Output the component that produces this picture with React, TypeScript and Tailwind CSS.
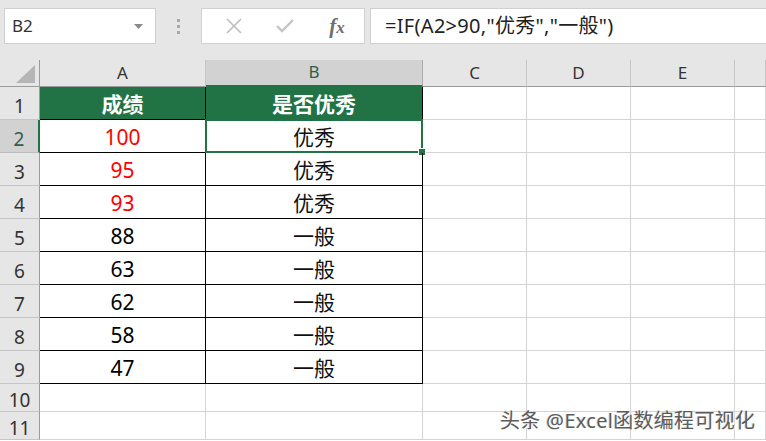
import React from 'react'

const GREEN = '#217346'

const rows: { score: string; result: string; hot: boolean }[] = [
  { score: '100', result: '优秀', hot: true },
  { score: '95', result: '优秀', hot: true },
  { score: '93', result: '优秀', hot: true },
  { score: '88', result: '一般', hot: false },
  { score: '63', result: '一般', hot: false },
  { score: '62', result: '一般', hot: false },
  { score: '58', result: '一般', hot: false },
  { score: '47', result: '一般', hot: false },
]

function ColHeader({ label, selected }: { label: string; selected?: boolean }) {
  return (
    <div
      className={
        selected
          ? 'flex items-end justify-center pb-[1px] bg-[#d2d2d2] border-r border-[#ababab] border-b-2 border-b-[#217346] text-[17px] text-[#2f5f44]'
          : 'flex items-end justify-center pb-[1px] bg-[#e6e6e6] border-r border-[#c6c6c6] border-b border-b-[#9b9b9b] text-[17px] text-[#333]'
      }
    >
      {label}
    </div>
  )
}

function RowHeader({ n, selected }: { n: number; selected?: boolean }) {
  return (
    <div
      className={
        selected
          ? 'flex items-center justify-center pt-[6px] bg-[#d2d2d2] border-b border-[#bdbdbd] border-r-2 border-r-[#217346] text-[19px] text-[#2f5f44]'
          : 'flex items-center justify-center pt-[6px] bg-[#e6e6e6] border-b border-[#c6c6c6] border-r border-r-[#9b9b9b] text-[19px] text-[#333]'
      }
    >
      {n}
    </div>
  )
}

function Blank() {
  return <div className="border-r border-b border-[#d4d4d4]" />
}

export default function App() {
  return (
    <div
      className="relative w-[766px] h-[441px] overflow-hidden bg-white"
      style={{ fontFamily: '"Noto Sans", "Noto Sans CJK SC", sans-serif' }}
    >
      {/* formula bar */}
      <div className="flex h-[60px] items-start bg-[#e6e6e6] pt-2 pl-1">
        <div className="flex h-9 w-[152px] items-center justify-between border border-[#d0d0d0] bg-white pl-[7px] pr-3">
          <span className="text-[17px] text-[#333]">B2</span>
          <svg width="9" height="5" viewBox="0 0 9 5">
            <path d="M0 0h9L4.5 5z" fill="#8a8a8a" />
          </svg>
        </div>
        <div className="flex h-9 w-[45px] flex-col items-center justify-center gap-[3px]">
          <span className="h-[3px] w-[3px] bg-[#a9a9a9]" />
          <span className="h-[3px] w-[3px] bg-[#a9a9a9]" />
          <span className="h-[3px] w-[3px] bg-[#a9a9a9]" />
        </div>
        <div className="flex h-9 w-[164px] items-center border border-[#d0d0d0] bg-white">
          <div className="flex w-[55px] justify-center pl-2">
            <svg width="16" height="16" viewBox="0 0 16 16">
              <path d="M1 1l14 14M15 1L1 15" stroke="#bdbdbd" strokeWidth="1.6" />
            </svg>
          </div>
          <div className="flex w-[55px] justify-center">
            <svg width="18" height="14" viewBox="0 0 18 14">
              <path d="M1 7l5 5L17 1" stroke="#c4c4c4" strokeWidth="2.4" fill="none" />
            </svg>
          </div>
          <div className="flex w-[50px] justify-center">
            <span
              className="text-[21px] italic font-bold text-[#6f6f6f] leading-none"
              style={{ fontFamily: '"Liberation Serif", serif' }}
            >
              f<span className="text-[17px]">x</span>
            </span>
          </div>
        </div>
        <div className="ml-[5px] flex h-9 flex-1 items-center border-y border-l border-[#d0d0d0] bg-white pl-[14px]">
          <span className="text-[20px] tracking-[0.3px] text-[#222]">=IF(A2&gt;90,"优秀","一般")</span>
        </div>
      </div>

      {/* sheet grid */}
      <div className="grid grid-cols-[40px_166px_217px_104px_104px_104px_31px] grid-rows-[27px_repeat(9,33px)_28px_28px]">
        <div className="flex items-end justify-end border-r border-b border-[#9b9b9b] bg-[#e6e6e6] pr-[4px] pb-[3px]">
          <svg width="19" height="18" viewBox="0 0 19 18">
            <path d="M19 0V18H0z" fill="#b5b5b5" />
          </svg>
        </div>
        <ColHeader label="A" />
        <ColHeader label="B" selected />
        <ColHeader label="C" />
        <ColHeader label="D" />
        <ColHeader label="E" />
        <ColHeader label="" />

        {/* row 1 */}
        <RowHeader n={1} />
        <div className="flex items-center justify-center pt-[3px] border-r border-b border-black bg-[#217346] text-[21px] font-bold text-white">
          成绩
        </div>
        <div className="flex items-center justify-center pt-[3px] border-r border-b border-black bg-[#217346] text-[21px] font-bold text-white">
          是否优秀
        </div>
        <Blank />
        <Blank />
        <Blank />
        <Blank />

        {rows.map((r, i) => (
          <React.Fragment key={i}>
            <RowHeader n={i + 2} selected={i === 0} />
            <div
              className={
                r.hot
                  ? 'flex items-center justify-center pt-[4px] border-r border-b border-black text-[21px] text-[#ff0000]'
                  : 'flex items-center justify-center pt-[4px] border-r border-b border-black text-[21px] text-black'
              }
            >
              {r.score}
            </div>
            <div className="relative flex items-center justify-center pt-[4px] border-r border-b border-black text-[21px] text-[#111]">
              {r.result}
              {i === 0 && (
                <div className="absolute -left-[1px] -top-[1px] -right-[1px] -bottom-[1px] border-2 border-[#217346]">
                  <div
                    className="absolute -right-[5px] -bottom-[5px] h-[8px] w-[8px] border border-white"
                    style={{ backgroundColor: GREEN }}
                  />
                </div>
              )}
            </div>
            <Blank />
            <Blank />
            <Blank />
            <Blank />
          </React.Fragment>
        ))}

        {[10, 11].map((n) => (
          <React.Fragment key={n}>
            <RowHeader n={n} />
            <Blank />
            <Blank />
            <Blank />
            <Blank />
            <Blank />
            <Blank />
          </React.Fragment>
        ))}
      </div>

      {/* watermark */}
      <div className="absolute left-[500px] top-[406px] text-[20px] tracking-[0.3px] text-[#5c5c5c] [text-shadow:1px_1px_0_#ffffff,-1px_0_0_#dcdcdc]">
        头条 @Excel函数编程可视化
      </div>
    </div>
  )
}
